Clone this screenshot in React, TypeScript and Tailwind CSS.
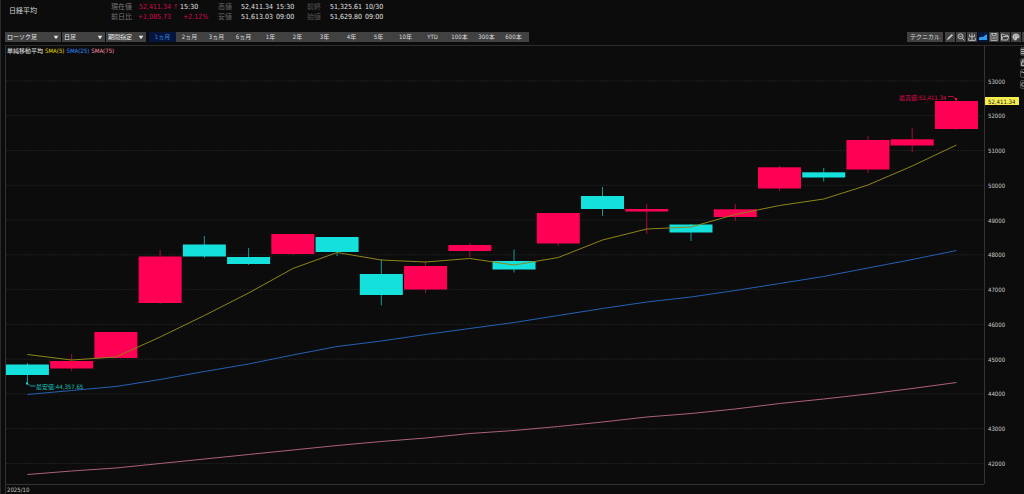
import { useState } from "react";
import type { ReactNode } from "react";

type Candle = { up: boolean; top: number; bottom: number; high: number; low: number };

const STEP = 44.24;
const FIRST_X = 22.4;
const BODY_WIDTH = 43;

// vertical positions on the chart canvas, oldest session first
const candles: Candle[] = [
  { up: false, top: 318.5, bottom: 329, high: 317, low: 337 },
  { up: true, top: 315, bottom: 322.5, high: 308, low: 325 },
  { up: true, top: 286, bottom: 312, high: 286, low: 312 },
  { up: true, top: 210.5, bottom: 257, high: 204, low: 258 },
  { up: false, top: 198.5, bottom: 210.5, high: 190, low: 212 },
  { up: false, top: 211, bottom: 218, high: 202, low: 219 },
  { up: true, top: 188, bottom: 208, high: 188, low: 209 },
  { up: false, top: 191, bottom: 206, high: 191, low: 210 },
  { up: false, top: 228, bottom: 249, high: 213, low: 259.5 },
  { up: true, top: 220, bottom: 243.5, high: 215.5, low: 247 },
  { up: true, top: 199, bottom: 205, high: 197, low: 211 },
  { up: false, top: 215, bottom: 223.5, high: 203.5, low: 226.5 },
  { up: true, top: 167, bottom: 197.5, high: 167, low: 200 },
  { up: false, top: 150, bottom: 163, high: 141, low: 170 },
  { up: true, top: 163, bottom: 165.5, high: 158, low: 188 },
  { up: false, top: 178.5, bottom: 186.5, high: 178, low: 195 },
  { up: true, top: 163.3, bottom: 171, high: 158, low: 175 },
  { up: true, top: 121.3, bottom: 142.5, high: 120, low: 145 },
  { up: false, top: 126.3, bottom: 131.5, high: 122, low: 135.5 },
  { up: true, top: 94, bottom: 123.5, high: 90, low: 127 },
  { up: true, top: 93.3, bottom: 99.5, high: 82, low: 106 },
  { up: true, top: 55, bottom: 83, high: 54, low: 84 },
];

const averages = [
  {
    name: "SMA(5)",
    stroke: "#8f8518",
    values: [308.5, 314, 311, 291, 269.5, 247, 222.5, 206.5, 214, 216, 212.5, 219, 211.5, 194, 183, 181, 168.5, 159.5, 153, 139, 120, 99],
  },
  {
    name: "SMA(25)",
    stroke: "#2460b4",
    values: [348.5, 344.5, 340.5, 333.5, 325.5, 318, 309, 300.5, 295, 288.5, 282.5, 276.5, 269.5, 262.5, 256, 251, 244.5, 237.5, 230.5, 222, 213.5, 204.5],
  },
  {
    name: "SMA(75)",
    stroke: "#ad6274",
    values: [428.5, 425, 422, 417.5, 413, 408.5, 404, 399.5, 395.5, 392, 387.5, 384.5, 380.5, 376, 371, 367.5, 363, 357.5, 353, 348, 342.5, 336.5],
  },
];

const prices = [53000, 52000, 51000, 50000, 49000, 48000, 47000, 46000, 45000, 44000, 43000, 42000];
const priceY = (price: number) => 35 + (53000 - price) * 0.03477;
const candleX = (i: number) => FIRST_X + i * STEP;

const ranges = ["1ヵ月", "2ヵ月", "3ヵ月", "6ヵ月", "1年", "2年", "3年", "4年", "5年", "10年", "YTD", "100本", "300本", "600本"];

function Picker({ label, options, className }: { label: string; options: string[]; className: string }) {
  return (
    <div className={`relative h-[10px] ${className}`}>
      <select
        aria-label={label}
        className="block h-full w-full appearance-none bg-[#414141] pl-[2px] text-[6px] leading-[10px] text-[#f0f0f0] outline-none"
      >
        {options.map((o) => (
          <option key={o}>{o}</option>
        ))}
      </select>
      <svg viewBox="0 0 6 5" className="pointer-events-none absolute top-[3px] right-[2px] h-[5px] w-[6px]">
        <path d="M0.7 0.7h4.6L3 4.3z" fill="#e8e8e8" />
      </svg>
    </div>
  );
}

function Tool({ label, active, children }: { label: string; active?: boolean; children: ReactNode }) {
  return (
    <button
      aria-label={label}
      className={`flex h-[10px] w-[10px] shrink-0 items-center justify-center ${active ? "bg-[#06153c]" : "bg-[#414141]"}`}
    >
      <svg viewBox="0 0 10 10" className="h-[10px] w-[10px]" fill="none" stroke="#c4c4c4" strokeWidth="1">
        {children}
      </svg>
    </button>
  );
}

function SideTool({ label, filled, children }: { label: string; filled?: boolean; children: ReactNode }) {
  return (
    <button
      aria-label={label}
      className={`h-[9px] w-[9px] rounded-[2px] border ${filled ? "border-[#414141] bg-[#414141]" : "border-[#4a4a4a] bg-[#161616]"}`}
    >
      <svg viewBox="0 0 7 7" className="h-[7px] w-[7px]" fill="none" stroke="#b0b0b0">
        {children}
      </svg>
    </button>
  );
}

function QuoteHeader() {
  return (
    <header className="flex h-8 items-start pl-[9px] text-[7px] leading-[10px] whitespace-nowrap">
      <h1 className="w-[102px] pt-[6px] text-[#d8d8d8]">日経平均</h1>
      <div className="grid w-[107px] grid-cols-[26px_34px_9px_1fr] pt-[2px]">
        <span className="text-[#777777]">現在値</span>
        <span className="text-right text-[#d8064a]">52,411.34</span>
        <span className="pl-[2px] text-[#d8064a]">↑</span>
        <span className="text-[#e2e2e2]">15:30</span>
        <span className="text-[#777777]">前日比</span>
        <span className="text-right text-[#d8064a]">+1,085.73</span>
        <span />
        <span className="pl-[3px] text-[#d8064a]">+2.12%</span>
      </div>
      <div className="grid w-[89px] grid-cols-[23px_35px_1fr] pt-[2px]">
        <span className="text-[#666666]">高値</span>
        <span className="text-[#e2e2e2]">52,411.34</span>
        <span className="text-[#e2e2e2]">15:30</span>
        <span className="text-[#666666]">安値</span>
        <span className="text-[#e2e2e2]">51,613.03</span>
        <span className="text-[#e2e2e2]">09:00</span>
      </div>
      <div className="grid w-[89px] grid-cols-[23px_35px_1fr] pt-[2px]">
        <span className="text-[#555555]">前終</span>
        <span className="text-[#e2e2e2]">51,325.61</span>
        <span className="text-[#e2e2e2]">10/30</span>
        <span className="text-[#555555]">始値</span>
        <span className="text-[#e2e2e2]">51,629.80</span>
        <span className="text-[#e2e2e2]">09:00</span>
      </div>
    </header>
  );
}

function Toolbar() {
  const [range, setRange] = useState("1ヵ月");
  return (
    <div className="flex h-[13px] items-start overflow-hidden pl-[5px] text-[7px] leading-[10px] whitespace-nowrap">
      <div className="flex gap-px">
        <Picker label="チャート種類" options={["ローソク足", "ラインチャート"]} className="w-14" />
        <Picker label="足種" options={["日足", "週足", "月足"]} className="w-[43px]" />
        <Picker label="期間" options={["期間指定"]} className="w-10" />
      </div>
      <div className="ml-[3px] flex bg-[#414141] pr-[2px] text-[6px]">
        {ranges.map((r) => (
          <button
            key={r}
            onClick={() => setRange(r)}
            className={`h-[10px] w-[27px] ${r === range ? "bg-[#06153c] text-[#2f8fe0]" : "text-[#dcdcdc]"}`}
          >
            {r}
          </button>
        ))}
      </div>
      <div className="-mr-2 ml-auto flex gap-px">
        <button className="mr-px h-[10px] w-9 shrink-0 bg-[#414141] text-[6px] text-[#dcdcdc]">テクニカル</button>
        <Tool label="描画">
          <path d="M2.2 7.8L3 6L6.8 2.2L7.8 3.2L4 7z" fill="#c4c4c4" strokeWidth="0.5" />
        </Tool>
        <Tool label="拡大">
          <circle cx="4.5" cy="4.3" r="2.5" />
          <path d="M6.3 6.2L8.5 8.3M3.3 4.3h2.4" />
        </Tool>
        <Tool label="出来高">
          <path d="M5 1.5v7M2.5 2.3v2.4h5V2.3M1.7 5.8v2.6h6.6V5.8" strokeWidth="0.9" />
        </Tool>
        <Tool label="エリア表示" active>
          <path d="M1 8V5.5L3.5 4.8L5.5 4.8L7 3.2L9 2.2V8z" fill="#2f9af0" stroke="none" />
        </Tool>
        <Tool label="保存">
          <path d="M2 1.5h6v7H2zM3.5 1.5v2h3v-2M3.3 5.2h3.4M3.3 6.8h3.4" strokeWidth="0.8" />
        </Tool>
        <Tool label="開く">
          <path d="M1.5 8V2.2h2.3l1 1h3v1.3M1.5 8l1.4-3.5h5.8L7.5 8z" strokeWidth="0.9" />
        </Tool>
        <Tool label="配色">
          <path d="M5 1.5C2.8 1.5 1.5 3 1.5 4.8C1.5 6.8 3 8.5 5 8.5C6 8.5 5.3 7 6.2 6.5C7 6 8.5 6.6 8.5 4.8C8.5 3 7 1.5 5 1.5z" fill="#c4c4c4" stroke="none" />
          <path d="M3 4.2h1M4.7 3h1M6.3 4.2h1M3.2 6h1" stroke="#414141" strokeWidth="0.7" />
        </Tool>
        <Tool label="設定">
          <circle cx="5" cy="5" r="2.5" />
        </Tool>
      </div>
    </div>
  );
}

function Chart() {
  return (
    <svg viewBox="0 0 1019 448" className="block h-auto w-full" fontSize="6" role="img" aria-label="日経平均 日足チャート">
      {/* price grid */}
      {prices.map((p) => (
        <g key={p}>
          <line x1="1" x2="979" y1={priceY(p)} y2={priceY(p)} stroke="#202020" strokeWidth="1" strokeDasharray="2 1" />
          <text x="983" y={priceY(p) + 2.5} fill="#cccccc">
            {p}
          </text>
        </g>
      ))}

      {/* candles */}
      {candles.map((c, i) => (
        <g key={i}>
          <line x1={candleX(i)} x2={candleX(i)} y1={c.high} y2={c.low} stroke={c.up ? "#a80a40" : "#139a95"} strokeWidth="1" />
          <rect
            x={candleX(i) - BODY_WIDTH / 2}
            y={c.top}
            width={BODY_WIDTH}
            height={c.bottom - c.top}
            fill={c.up ? "#ff0055" : "#14e0dc"}
          />
        </g>
      ))}

      {averages.map((a) => (
        <polyline
          key={a.name}
          points={a.values.map((v, i) => `${candleX(i)},${v}`).join(" ")}
          fill="none"
          stroke={a.stroke}
          strokeWidth="1"
        />
      ))}

      {/* high and low markers */}
      <text x="894" y="54" fill="#e00650">
        最高値:52,411.34
      </text>
      <path d="M943 50.5h5l3 2.5" fill="none" stroke="#b80843" />
      <rect x="950" y="52" width="2" height="2" fill="#ff0055" />
      <text x="31" y="343" fill="#14c4be">
        最安値:44,357.65
      </text>
      <path d="M22.5 337.5l3 2.5h5" fill="none" stroke="#129d98" />
      <rect x="21" y="336.5" width="2" height="2" fill="#14e0dc" />

      {/* axes */}
      <path d="M0.5 0V448M979.5 0V438" stroke="#333333" fill="none" />
      <path d="M0 438.5H979" stroke="#333333" fill="none" />
      <rect x="980" y="51" width="34" height="8" fill="#f6ee4f" />
      <text x="983" y="57.5" fill="#222222">
        52,411.34
      </text>
      <text x="2" y="446" fill="#c4c4c4">
        2025/10
      </text>
    </svg>
  );
}

export default function App() {
  return (
    <div className="min-h-screen overflow-hidden border-l border-[#2a2a2a] bg-[#0c0c0c] font-['DejaVu_Sans_Condensed','Noto_Sans','Noto_Sans_CJK_JP',sans-serif]">
      <div className="-ml-px">
        <QuoteHeader />
        <Toolbar />
        <main className="relative ml-[5px] border-t border-[#2c2c2c]">
          <ul className="absolute top-[1px] left-[2px] flex gap-[2px] text-[6px] leading-[7px]">
            <li className="text-[#e8e8e8]">単純移動平均</li>
            <li className="text-[#e8d800]">SMA(5)</li>
            <li className="text-[#2f8cff]">SMA(25)</li>
            <li className="text-[#ff8cab]">SMA(75)</li>
          </ul>
          <Chart />
          <div className="absolute top-[1px] -right-[5px] flex flex-col gap-[2px]">
            <SideTool label="一覧" filled>
              <path d="M0 1.5h4M0 3.5h4M0 5.5h4" />
            </SideTool>
            <SideTool label="ロック" filled>
              <path d="M0.5 3h4v3.5h-4zM1.5 3V1.2h2" />
            </SideTool>
            <SideTool label="次へ">
              <path d="M0 2h2l2 2" />
            </SideTool>
            <SideTool label="更新">
              <circle cx="2.5" cy="3.5" r="1.8" />
            </SideTool>
          </div>
        </main>
      </div>
    </div>
  );
}
